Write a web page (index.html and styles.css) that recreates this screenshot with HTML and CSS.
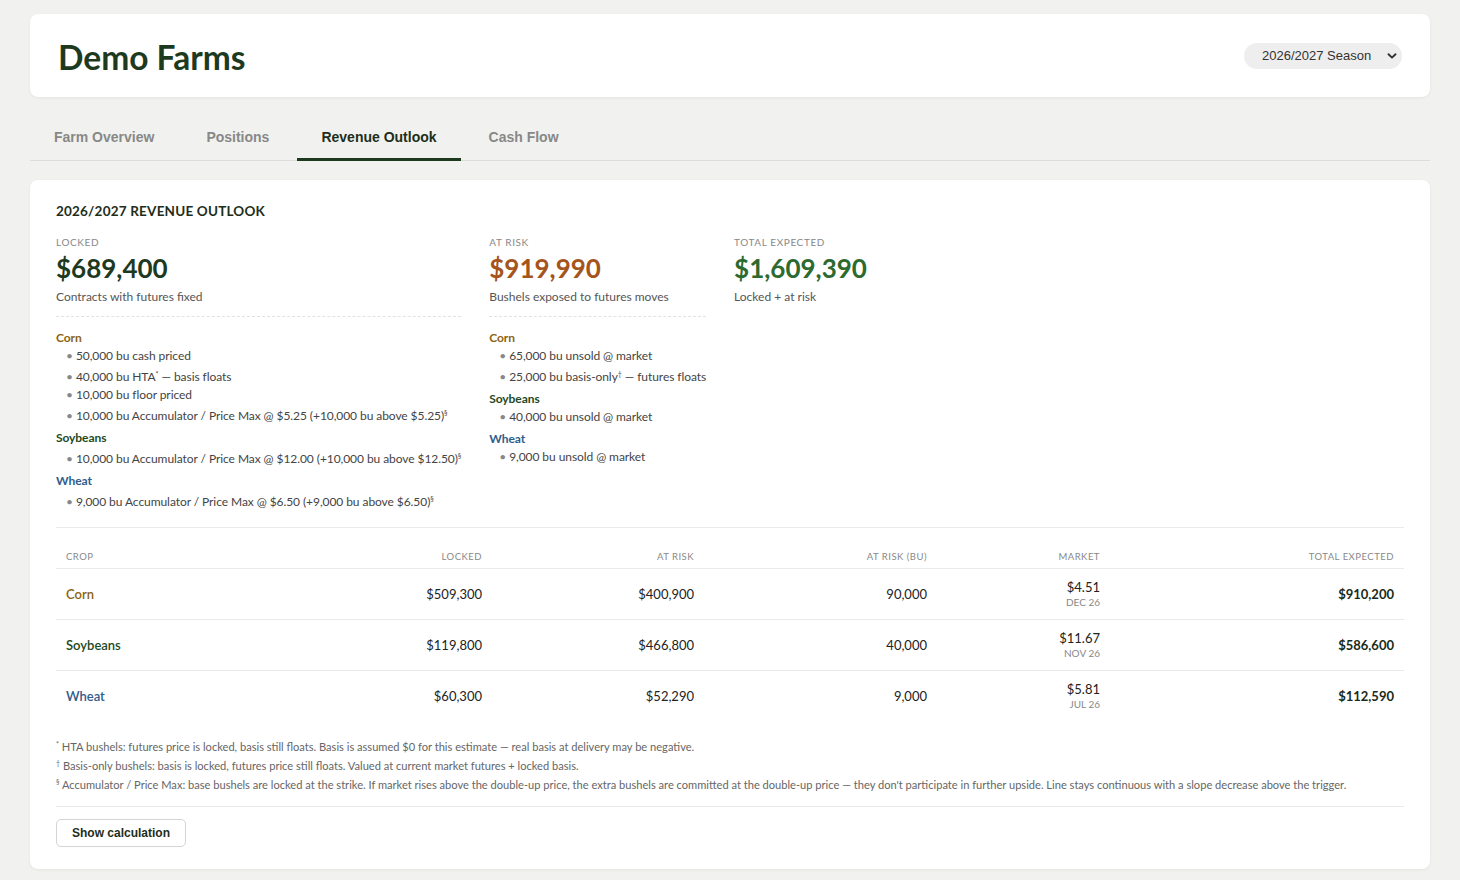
FILE: index.html
```html
<!DOCTYPE html>
<html lang="en">
<head>
  <meta charset="UTF-8" />
  <title>Demo Farms - Revenue Outlook</title>
  <link rel="stylesheet" href="styles.css">
</head>
<body>
  <header class="top">
    <h1>Demo Farms</h1>
    <div class="season">
      <span>2026/2027 Season</span>
      <svg width="10" height="10" viewBox="0 0 10 10"><path d="M1.5 3.2 L5 6.6 L8.5 3.2" fill="none" stroke="#333" stroke-width="1.9" stroke-linecap="round" stroke-linejoin="round"/></svg>
    </div>
  </header>

  <nav class="tabs">
    <button class="tab">Farm Overview</button>
    <button class="tab">Positions</button>
    <button class="tab active">Revenue Outlook</button>
    <button class="tab">Cash Flow</button>
  </nav>

  <section class="card">
    <h2>2026/2027 Revenue Outlook</h2>

    <div class="summary">
      <div class="sum-col">
        <div class="label">Locked</div>
        <div class="big locked">$689,400</div>
        <div class="sub">Contracts with futures fixed</div>
        <div class="breakdown">
          <div class="crop corn">Corn</div>
          <ul>
            <li>50,000 bu cash priced</li>
            <li>40,000 bu HTA<sup>*</sup> — basis floats</li>
            <li>10,000 bu floor priced</li>
            <li>10,000 bu Accumulator / Price Max @ $5.25 (+10,000 bu above $5.25)<sup>§</sup></li>
          </ul>
          <div class="crop soy">Soybeans</div>
          <ul>
            <li>10,000 bu Accumulator / Price Max @ $12.00 (+10,000 bu above $12.50)<sup>§</sup></li>
          </ul>
          <div class="crop wheat">Wheat</div>
          <ul>
            <li>9,000 bu Accumulator / Price Max @ $6.50 (+9,000 bu above $6.50)<sup>§</sup></li>
          </ul>
        </div>
      </div>
      <div class="sum-col">
        <div class="label">At Risk</div>
        <div class="big risk">$919,990</div>
        <div class="sub">Bushels exposed to futures moves</div>
        <div class="breakdown">
          <div class="crop corn">Corn</div>
          <ul>
            <li>65,000 bu unsold @ market</li>
            <li>25,000 bu basis-only<sup>†</sup> — futures floats</li>
          </ul>
          <div class="crop soy">Soybeans</div>
          <ul>
            <li>40,000 bu unsold @ market</li>
          </ul>
          <div class="crop wheat">Wheat</div>
          <ul>
            <li>9,000 bu unsold @ market</li>
          </ul>
        </div>
      </div>
      <div class="sum-col">
        <div class="label">Total Expected</div>
        <div class="big total">$1,609,390</div>
        <div class="sub">Locked + at risk</div>
      </div>
    </div>

    <div class="table-wrap">
      <table>
        <thead>
          <tr>
            <th class="c-crop">Crop</th>
            <th class="c-locked num">Locked</th>
            <th class="c-risk num">At Risk</th>
            <th class="c-bu num">At Risk (bu)</th>
            <th class="c-mkt num">Market</th>
            <th class="c-total num">Total Expected</th>
          </tr>
        </thead>
        <tbody>
          <tr>
            <td class="crop-name corn">Corn</td>
            <td class="num">$509,300</td>
            <td class="num">$400,900</td>
            <td class="num">90,000</td>
            <td class="num"><div class="price">$4.51</div><div class="month">DEC 26</div></td>
            <td class="num strong">$910,200</td>
          </tr>
          <tr>
            <td class="crop-name soy">Soybeans</td>
            <td class="num">$119,800</td>
            <td class="num">$466,800</td>
            <td class="num">40,000</td>
            <td class="num"><div class="price">$11.67</div><div class="month">NOV 26</div></td>
            <td class="num strong">$586,600</td>
          </tr>
          <tr>
            <td class="crop-name wheat">Wheat</td>
            <td class="num">$60,300</td>
            <td class="num">$52,290</td>
            <td class="num">9,000</td>
            <td class="num"><div class="price">$5.81</div><div class="month">JUL 26</div></td>
            <td class="num strong">$112,590</td>
          </tr>
        </tbody>
      </table>
    </div>

    <div class="notes">
      <p><sup>*</sup> HTA bushels: futures price is locked, basis still floats. Basis is assumed $0 for this estimate — real basis at delivery may be negative.</p>
      <p><sup>†</sup> Basis-only bushels: basis is locked, futures price still floats. Valued at current market futures + locked basis.</p>
      <p><sup>§</sup> Accumulator / Price Max: base bushels are locked at the strike. If market rises above the double-up price, the extra bushels are committed at the double-up price — they don't participate in further upside. Line stays continuous with a slope decrease above the trigger.</p>
    </div>

    <div class="actions">
      <button class="calc-btn">Show calculation</button>
    </div>
  </section>
</body>
</html>
```

FILE: styles.css
```css
body {
  margin: 0;
  padding: 14px 30px 12px;
  background: #f1f2ef;
  font-family: Lato, 'Noto Sans', sans-serif;
  color: #2b2b2b;
}
.top {
  display: flex;
  align-items: center;
  justify-content: space-between;
  background: #fff;
  border-radius: 8px;
  box-shadow: 0 1px 3px rgba(0,0,0,0.06);
  padding: 0 28px;
  height: 83px;
}
.top h1 {
  margin: 0;
  padding-top: 3px;
  font-size: 33.5px;
  font-weight: 700;
  color: #1e3a1e;
}
.season {
  display: flex;
  align-items: center;
  justify-content: space-between;
  width: 158px;
  height: 26px;
  box-sizing: border-box;
  padding: 0 5px 0 18px;
  background: #eeeeee;
  border-radius: 13px;
  font-family: 'Liberation Sans', Arial, sans-serif;
  font-size: 13px;
  color: #333;
}
.tabs {
  display: flex;
  gap: 4px;
  margin-top: 21px;
  border-bottom: 1px solid #dcdcd8;
}
.tab {
  background: none;
  border: none;
  border-bottom: 3px solid transparent;
  margin-bottom: -1px;
  padding: 11px 24px 13px;
  font-family: 'Liberation Sans', Arial, sans-serif;
  font-size: 14px;
  font-weight: 700;
  color: #888;
  cursor: pointer;
}
.tab.active {
  color: #1e2e1a;
  border-bottom-color: #1e3a1e;
}
.card {
  margin-top: 19px;
  background: #fff;
  border-radius: 8px;
  box-shadow: 0 1px 3px rgba(0,0,0,0.06);
  padding: 23px 26px 22px;
}
.card h2 {
  margin: 0 0 17px;
  font-size: 13.5px;
  font-weight: 700;
  letter-spacing: 0.2px;
  text-transform: uppercase;
  color: #1e2e1a;
}
.summary {
  display: flex;
  align-items: flex-start;
  gap: 28px;
}
.label {
  font-size: 10px;
  letter-spacing: 0.6px;
  text-transform: uppercase;
  color: #888;
}
.big {
  font-size: 26px;
  font-weight: 700;
  line-height: 34px;
  margin-top: 3px;
}
.big.locked { color: #1e3a1e; }
.big.risk { color: #a5541c; }
.big.total { color: #2d6a2f; }
.sub {
  font-size: 12px;
  color: #555;
  margin-top: 4px;
}
.breakdown {
  margin-top: 12px;
  padding-top: 11px;
  border-top: 1px dashed #e2e2e2;
  font-size: 12px;
  letter-spacing: -0.07px;
}
.crop {
  font-weight: 700;
  margin-top: 3px;
  line-height: 19px;
}
.crop:first-child { margin-top: 0; }
.corn { color: #8b6410; }
.soy { color: #1e4a1e; }
.wheat { color: #2f5c8c; }
ul {
  list-style: none;
  margin: 0;
  padding: 0 0 0 10px;
}
li {
  color: #444;
  line-height: 18px;
}
li::before {
  content: "•";
  color: #888;
  margin-right: 3px;
}
sup {
  font-size: 7px;
  line-height: 18px;
  vertical-align: 4px;
}
.table-wrap {
  margin-top: 16px;
  border-top: 1px solid #eaeaea;
  padding-top: 23px;
}
table {
  width: 100%;
  border-collapse: collapse;
  table-layout: fixed;
}
th {
  font-size: 9.5px;
  font-weight: 400;
  letter-spacing: 0.5px;
  text-transform: uppercase;
  color: #888;
  text-align: left;
  padding: 0 10px 6px;
  border-bottom: 1px solid #eaeaea;
}
.c-crop { width: 200px; }
.c-locked { width: 196px; }
.c-risk { width: 192px; }
.c-bu { width: 213px; }
.c-mkt { width: 153px; }
td {
  font-size: 13px;
  color: #222;
  padding: 10px 10px;
  border-bottom: 1px solid #eaeaea;
  height: 30px;
}
tbody tr:last-child td { border-bottom: none; }
.num { text-align: right; }
.crop-name { font-weight: 600; }
.strong { font-weight: 700; color: #1a2a18; }
.price { line-height: 17px; }
.month {
  font-size: 10px;
  color: #888;
  line-height: 13px;
}
.notes {
  margin-top: 16px;
  padding-bottom: 12px;
  border-bottom: 1px solid #eaeaea;
}
.notes p {
  margin: 0;
  font-size: 11.1px;
  line-height: 19px;
  color: #666;
}
.notes sup {
  line-height: 0;
  vertical-align: 4px;
}
.actions {
  padding-top: 12px;
}
.calc-btn {
  background: #fff;
  border: 1px solid #d4d4d4;
  border-radius: 5px;
  padding: 0 15px;
  height: 28px;
  font-family: 'Liberation Sans', Arial, sans-serif;
  font-size: 12px;
  font-weight: 700;
  color: #1e2e1a;
  cursor: pointer;
}
```
